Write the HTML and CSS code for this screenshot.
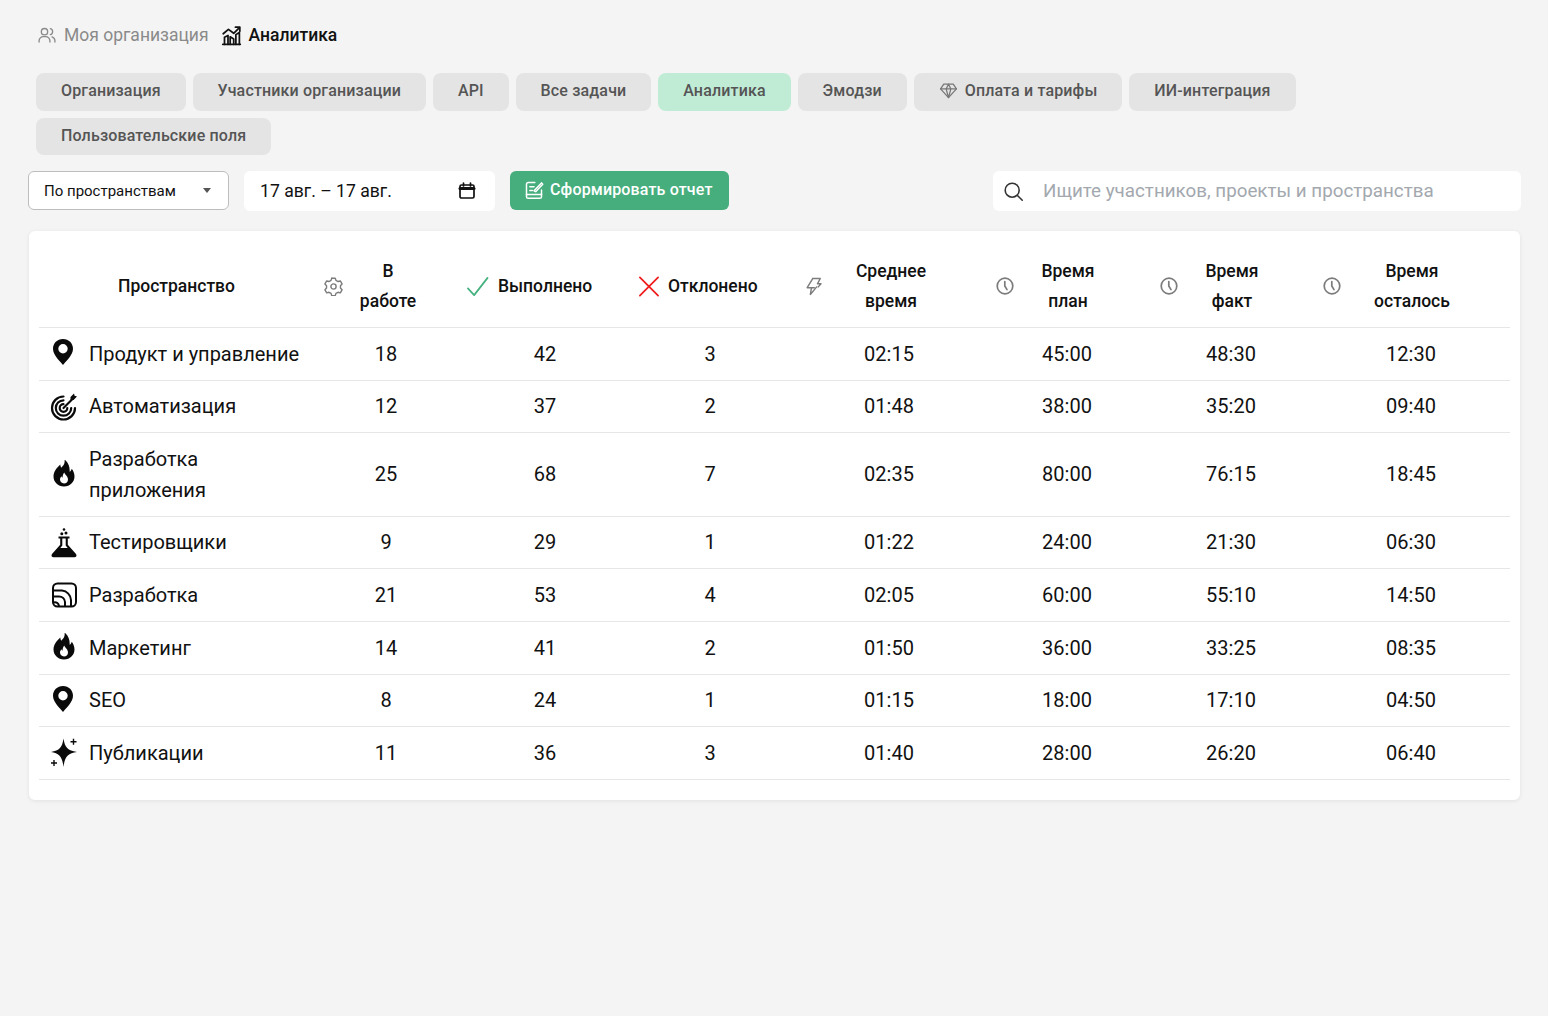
FILE: index.html
```html
<!DOCTYPE html>
<html lang="ru">
<head>
    <meta charset="UTF-8">
    <title>Аналитика</title>
    <link rel="stylesheet" href="styles.css">
</head>
<body>
    <!-- Shared icons -->
    <svg class="sprite" xmlns="http://www.w3.org/2000/svg">
        <symbol id="i-pin" viewBox="0 2 30 30">
            <path fill="currentColor" fill-rule="evenodd" d="M15 2C9.200 2 5 6.300 5 11.800 5 18.200 12.200 24.500 15 28c2.800-3.500 10-9.800 10-16.200C25 6.300 20.800 2 15 2zM15 7a4.700 4.700 0 1 1 0 9.400 4.700 4.700 0 0 1 0-9.400z"/>
        </symbol>
        <symbol id="i-fire" viewBox="-1 2 30 30">
            <path fill="currentColor" fill-rule="evenodd" d="M15.500 1.500c.8 4-1.200 6-3.200 8.200-.7-1-1-2-1-3.200C8 9.500 4.500 13.500 4.500 18.500c0 5.500 4.500 10 10.500 10s10.500-4.500 10.500-10c0-3-1.200-5.800-2.800-7.700-.3 1.400-1 2.500-2 3.100.2-5-1.200-9.400-5.200-12.400zM15.300 14.500c.4 2 3.700 3.500 3.700 7 0 2.500-1.800 4-4 4s-4-1.600-4-3.900c0-1.500.7-2.600 1.500-3.400.2.800.5 1.200 1 1.500.1-2 .7-3.900 1.800-5.200z"/>
        </symbol>
        <symbol id="i-clock" viewBox="0 0 18 18">
            <circle cx="9" cy="9" r="7.800" fill="none" stroke="currentColor" stroke-width="1.700"/>
            <path d="M8.800 4.500V9l2.200 3.600" fill="none" stroke="currentColor" stroke-width="1.700" stroke-linecap="round" stroke-linejoin="round"/>
        </symbol>
    </svg>

    <!-- Breadcrumbs -->
    <nav class="crumbs">
        <span class="crumb">
            <svg class="crumb-icon" viewBox="0 0 24 24"><circle cx="9" cy="8" r="3.800"/><path d="M2.500 20.500v-1.500a5 5 0 0 1 5-5h3a5 5 0 0 1 5 5v1.500"/><path d="M16 4.300a3.800 3.800 0 0 1 0 7.300"/><path d="M21.500 20.500v-1.500a5 5 0 0 0-3.500-4.700"/></svg>
            Моя организация
        </span>
        <span class="crumb crumb-current">
            <svg class="crumb-icon" viewBox="0 0 24 24"><path d="M2 22h20"/><path d="M4 22v-8l4-2v10M10.500 22v-8.500l4 2.500v6M17 22v-11l4-2.500V22"/><path d="M2.500 10l6-5 6 4.500L21 3"/><path d="M16.500 2.500H21.500V7"/></svg>
            Аналитика
        </span>
    </nav>

    <!-- Tabs -->
    <div class="tabs">
        <a class="tab">Организация</a>
        <a class="tab">Участники организации</a>
        <a class="tab">API</a>
        <a class="tab">Все задачи</a>
        <a class="tab tab-active">Аналитика</a>
        <a class="tab">Эмодзи</a>
        <a class="tab">
            <svg class="tab-icon" viewBox="0 0 24 24"><path d="M6 4h12l4 6-10 11L2 10z"/><path d="M2 10h20M9 10l3 11 3-11M9 10l3-6 3 6"/></svg>
            Оплата и тарифы
        </a>
        <a class="tab">ИИ-интеграция</a>
        <a class="tab">Пользовательские поля</a>
    </div>

    <!-- Filters -->
    <div class="toolbar">
        <div class="select">
            <span>По пространствам</span>
            <span class="select-arrow"></span>
        </div>
        <div class="date">
            <span>17 авг. – 17 авг.</span>
            <svg class="date-icon" viewBox="0 0 18 18"><rect x="2" y="3" width="14" height="13" rx="1.500"/><path d="M2 6.500h14" stroke-width="3"/><path d="M5.500 1v3M12.500 1v3"/></svg>
        </div>
        <button class="report-button">
            <svg class="report-icon" viewBox="0 0 24 24"><path d="M13 3H5a2 2 0 0 0-2 2v15a2 2 0 0 0 2 2h14a2 2 0 0 0 2-2v-8"/><path d="M3 17.500h18"/><path d="M7 8h5M7 12.500h3"/><path d="M12 13l9-9.500 1.500 1.500-8.500 9z"/></svg>
            Сформировать отчет
        </button>
        <div class="search">
            <svg class="search-icon" viewBox="0 0 24 24"><circle cx="10.500" cy="10.500" r="8"/><path d="M16.500 16.500L22 22"/></svg>
            <span>Ищите участников, проекты и пространства</span>
        </div>
    </div>

    <!-- Report table -->
    <div class="card">
        <table class="report">
            <colgroup>
                <col class="col-name"><col class="col-work"><col class="col-done"><col class="col-rejected">
                <col class="col-avg"><col class="col-plan"><col class="col-fact"><col class="col-left">
            </colgroup>
            <thead>
                <tr>
                    <th class="th-name">Пространство</th>
                    <th><div class="th-inner th-work">
                        <svg class="th-icon" viewBox="0 0 24 24"><path d="M9.800 2.500h4.400l.9 2.800 2.600 1.400 2.900-.7 2.200 3.800-2 2.200v3l2 2.200-2.200 3.800-2.900-.7-2.600 1.400-.9 2.800H9.800" transform="translate(0 -1)"/><path d="M9.800 1.500l-.9 2.800-2.600 1.400-2.900-.7-2.200 3.800 2 2.200v3l-2 2.200 2.200 3.800 2.900-.7 2.600 1.400.9 2.800"/><circle cx="12" cy="12" r="3.300"/></svg>
                        <span class="th-label">В<br>работе</span>
                    </div></th>
                    <th><div class="th-inner th-done">
                        <svg class="th-mark" viewBox="0 0 24 24"><path class="mark-ok" d="M2 14l6.500 7L22.500 3"/></svg>
                        <span class="th-label">Выполнено</span>
                    </div></th>
                    <th><div class="th-inner th-rejected">
                        <svg class="th-mark" viewBox="0 0 24 24"><path class="mark-no" d="M3 2.500l19 19M22 2.500l-19 19"/></svg>
                        <span class="th-label">Отклонено</span>
                    </div></th>
                    <th><div class="th-inner th-avg">
                        <svg class="th-icon" viewBox="0 0 24 24"><path d="M11 2L4 13.500h5.500L8 22l8-9.500M11 2h9.500L17 8.500h4.500L18 12.500"/><path d="M10 13.500h3"/></svg>
                        <span class="th-label">Среднее<br>время</span>
                    </div></th>
                    <th><div class="th-inner th-plan">
                        <svg class="th-clock"><use href="#i-clock"/></svg>
                        <span class="th-label">Время<br>план</span>
                    </div></th>
                    <th><div class="th-inner th-fact">
                        <svg class="th-clock"><use href="#i-clock"/></svg>
                        <span class="th-label">Время<br>факт</span>
                    </div></th>
                    <th><div class="th-inner th-left">
                        <svg class="th-clock"><use href="#i-clock"/></svg>
                        <span class="th-label">Время<br>осталось</span>
                    </div></th>
                </tr>
            </thead>
            <tbody>
                <tr>
                    <td><div class="space"><svg class="space-icon"><use href="#i-pin"/></svg><span>Продукт и управление</span></div></td>
                    <td>18</td><td>42</td><td>3</td><td>02:15</td><td>45:00</td><td>48:30</td><td>12:30</td>
                </tr>
                <tr>
                    <td><div class="space">
                        <svg class="space-icon" viewBox="-1 0 30 30"><g class="target"><path d="M14.500 4.500A11.500 11.500 0 1 0 26 16"/><path d="M14.500 8.300A7.700 7.700 0 1 0 22.200 16"/><path d="M14.500 12.200a3.800 3.800 0 1 0 3.800 3.800"/><path d="M14.500 16L24 6.500"/></g><path fill="currentColor" d="M21.500 5L25 1.500l.6 2.200 2.400.7-3.500 3.600h-3z"/></svg>
                        <span>Автоматизация</span>
                    </div></td>
                    <td>12</td><td>37</td><td>2</td><td>01:48</td><td>38:00</td><td>35:20</td><td>09:40</td>
                </tr>
                <tr>
                    <td><div class="space"><svg class="space-icon"><use href="#i-fire"/></svg><span>Разработка<br>приложения</span></div></td>
                    <td>25</td><td>68</td><td>7</td><td>02:35</td><td>80:00</td><td>76:15</td><td>18:45</td>
                </tr>
                <tr>
                    <td><div class="space">
                        <svg class="space-icon" viewBox="-1 0 30 30"><path fill="currentColor" fill-rule="evenodd" d="M9.500 8.500h11v2h-1.700v6.300L27 26c1.100 1.500.3 3.300-1.600 3.300H4.600C2.700 29.300 1.900 27.500 3 26l8.200-9.200v-6.300H9.500zM13.300 10.500v7l-2 2.500h7.400l-2-2.500v-7z"/><circle cx="12.800" cy="5.800" r="1.500" fill="currentColor"/><circle cx="17" cy="5" r="1.500" fill="currentColor"/><circle cx="15" cy="1.500" r="1.300" fill="currentColor"/></svg>
                        <span>Тестировщики</span>
                    </div></td>
                    <td>9</td><td>29</td><td>1</td><td>01:22</td><td>24:00</td><td>21:30</td><td>06:30</td>
                </tr>
                <tr>
                    <td><div class="space">
                        <svg class="space-icon" viewBox="-1 0 30 30"><g class="rss"><rect x="4" y="3.500" width="23" height="23" rx="4.500"/><path d="M4.500 10.500H13a10 10 0 0 1 9 9.500v6"/><path d="M4.500 16.500H10a6 6 0 0 1 6 5.500v4"/><path d="M4.500 22.500a4 4 0 0 1 5.500 3.500"/></g></svg>
                        <span>Разработка</span>
                    </div></td>
                    <td>21</td><td>53</td><td>4</td><td>02:05</td><td>60:00</td><td>55:10</td><td>14:50</td>
                </tr>
                <tr>
                    <td><div class="space"><svg class="space-icon"><use href="#i-fire"/></svg><span>Маркетинг</span></div></td>
                    <td>14</td><td>41</td><td>2</td><td>01:50</td><td>36:00</td><td>33:25</td><td>08:35</td>
                </tr>
                <tr>
                    <td><div class="space"><svg class="space-icon"><use href="#i-pin"/></svg><span>SEO</span></div></td>
                    <td>8</td><td>24</td><td>1</td><td>01:15</td><td>18:00</td><td>17:10</td><td>04:50</td>
                </tr>
                <tr>
                    <td><div class="space">
                        <svg class="space-icon" viewBox="0 0 30 30"><path fill="currentColor" d="M15.500 .500C16.800 9.500 19.500 12.500 29 14c-9.500 1.500-12.200 4.500-13.500 15-1.300-10.500-4-13.500-12.500-15 8.500-1.500 11.200-4.500 12.500-13.500z"/><path fill="currentColor" d="M24.800 .800h1.400v2.300h2.300v1.400h-2.300v2.300h-1.400V4.500h-2.300V3.100h2.300zM5.300 22h1.400v2.300H9v1.400H6.700V28H5.300v-2.300H3v-1.400h2.300z"/></svg>
                        <span>Публикации</span>
                    </div></td>
                    <td>11</td><td>36</td><td>3</td><td>01:40</td><td>28:00</td><td>26:20</td><td>06:40</td>
                </tr>
            </tbody>
        </table>
    </div>
</body>
</html>
```

FILE: styles.css
```css
/* General styles */
body {
    margin: 0;
    padding: 20px 28px 0;
    min-height: 996px;
    box-sizing: border-box;
    background: #f4f4f4;
    font-family: Roboto, "Noto Sans", sans-serif;
    color: #111;
}

svg {
    fill: none;
    stroke: currentColor;
    stroke-linecap: round;
    stroke-linejoin: round;
    flex-shrink: 0;
}

.sprite {
    display: none;
}

/* Breadcrumbs */
.crumbs {
    display: flex;
    align-items: center;
    gap: 12px;
    height: 30px;
    padding-left: 9px;
    font-size: 17.500px;
    line-height: 30px;
}

.crumb {
    display: flex;
    align-items: center;
    gap: 7px;
    color: #8a8a8a;
}

.crumb-current {
    color: #111;
    font-weight: 500;
}

.crumb-icon {
    width: 20px;
    height: 20px;
    stroke-width: 1.600;
}

.crumb-current .crumb-icon {
    width: 21px;
    height: 21px;
    stroke-width: 2;
}

/* Tabs */
.tabs {
    display: flex;
    flex-wrap: wrap;
    gap: 7px 6.900px;
    margin: 23px 0 0 8px;
}

.tab {
    display: flex;
    align-items: center;
    gap: 7px;
    box-sizing: border-box;
    height: 37.500px;
    padding: 0 25px 2px;
    border-radius: 8px;
    background: #e4e4e4;
    color: #555;
    font-size: 16px;
    font-weight: 500;
    letter-spacing: 0.150px;
}

.tab-active {
    background: #c0ecd5;
}

.tab-icon {
    width: 19px;
    height: 19px;
    stroke-width: 1.600;
    color: #777;
}

/* Filters */
.toolbar {
    display: flex;
    align-items: flex-start;
    gap: 15px;
    margin-top: 16px;
}

.select {
    display: flex;
    align-items: center;
    justify-content: space-between;
    box-sizing: border-box;
    width: 201px;
    height: 39px;
    padding: 0 17px 0 15px;
    border: 1px solid #bdbdbd;
    border-radius: 6px;
    background: #fff;
    font-size: 15px;
}

.select-arrow {
    width: 0;
    height: 0;
    border-left: 4.500px solid transparent;
    border-right: 4.500px solid transparent;
    border-top: 5px solid #555;
}

.date {
    display: flex;
    align-items: center;
    justify-content: space-between;
    box-sizing: border-box;
    width: 251px;
    height: 40px;
    padding: 0 19px 0 16px;
    border-radius: 6px;
    background: #fff;
    font-size: 17.600px;
}

.date-icon {
    width: 18px;
    height: 18px;
    stroke-width: 1.700;
}

.report-button {
    display: flex;
    align-items: center;
    gap: 6px;
    box-sizing: border-box;
    width: 219px;
    height: 39px;
    padding: 0 0 2px 14px;
    border: none;
    border-radius: 6px;
    background: #46ae7d;
    color: #fff;
    font-family: inherit;
    font-size: 16px;
    font-weight: 500;
    letter-spacing: 0.150px;
}

.report-icon {
    width: 20px;
    height: 20px;
    stroke-width: 1.800;
}

.search {
    display: flex;
    align-items: center;
    gap: 19px;
    box-sizing: border-box;
    width: 528px;
    height: 40px;
    margin-left: auto;
    margin-right: -1px;
    padding-left: 10px;
    border-radius: 6px;
    background: #fff;
    color: #a3a8ae;
    font-size: 18.800px;
}

.search-icon {
    width: 21px;
    height: 21px;
    stroke-width: 1.800;
    color: #333;
}

/* Report table */
.card {
    margin: 20px 0 0 1px;
    padding: 14px 10px 20px;
    border-radius: 6px;
    background: #fff;
    box-shadow: 0 1px 4px rgba(0, 0, 0, 0.08);
}

.report {
    width: 100%;
    table-layout: fixed;
    border-collapse: collapse;
}

.col-name { width: 277px; }
.col-work { width: 140px; }
.col-done { width: 178px; }
.col-rejected { width: 152px; }
.col-avg { width: 206px; }
.col-plan { width: 150px; }
.col-fact { width: 178px; }

.report th {
    height: 82px;
    padding: 0;
    border-bottom: 1px solid #e6e6e6;
    font-size: 17.500px;
    font-weight: 500;
    line-height: 30px;
}

.report td {
    padding: 10.500px 0;
    border-bottom: 1px solid #e6e6e6;
    font-size: 20px;
    line-height: 30.670px;
    text-align: center;
}

.report td:last-child {
    padding-right: 8px;
}

.report th.th-name {
    padding-right: 2px;
}

.th-inner {
    display: flex;
    align-items: center;
}

.th-label {
    text-align: center;
}

.th-icon {
    width: 19px;
    height: 19px;
    stroke-width: 1.800;
    color: #7c7c7c;
}

.th-clock {
    width: 18px;
    height: 18px;
    color: #7c7c7c;
}

.th-mark {
    width: 23px;
    height: 23px;
    stroke-width: 1.800;
}

.mark-ok {
    stroke: #45b17f;
}

.mark-no {
    stroke: #f01c1c;
}

/* Each header cell keeps its icon left of a centred label */
.th-work { padding-left: 8px; }
.th-work .th-label { width: 60px; margin-left: 15px; }
.th-done { padding-left: 10px; gap: 9px; }
.th-rejected { padding-left: 3px; gap: 8px; }
.th-avg { padding-left: 18px; }
.th-avg .th-label { width: 72px; margin-left: 32px; }
.th-plan { padding-left: 4px; }
.th-plan .th-label { width: 60px; margin-left: 24px; }
.th-fact { padding-left: 18px; }
.th-fact .th-label { width: 60px; margin-left: 24px; }
.th-left { padding-left: 3px; }
.th-left .th-label { width: 80px; margin-left: 31px; }

.space {
    display: flex;
    align-items: center;
    gap: 11px;
    padding-left: 9px;
    text-align: left;
}

.space-icon {
    width: 30px;
    height: 30px;
    stroke: none;
    color: #0a0a0a;
}

.target path {
    fill: none;
    stroke: currentColor;
    stroke-width: 2.200;
}

.rss rect,
.rss path {
    fill: none;
    stroke: currentColor;
    stroke-width: 2;
}
```
